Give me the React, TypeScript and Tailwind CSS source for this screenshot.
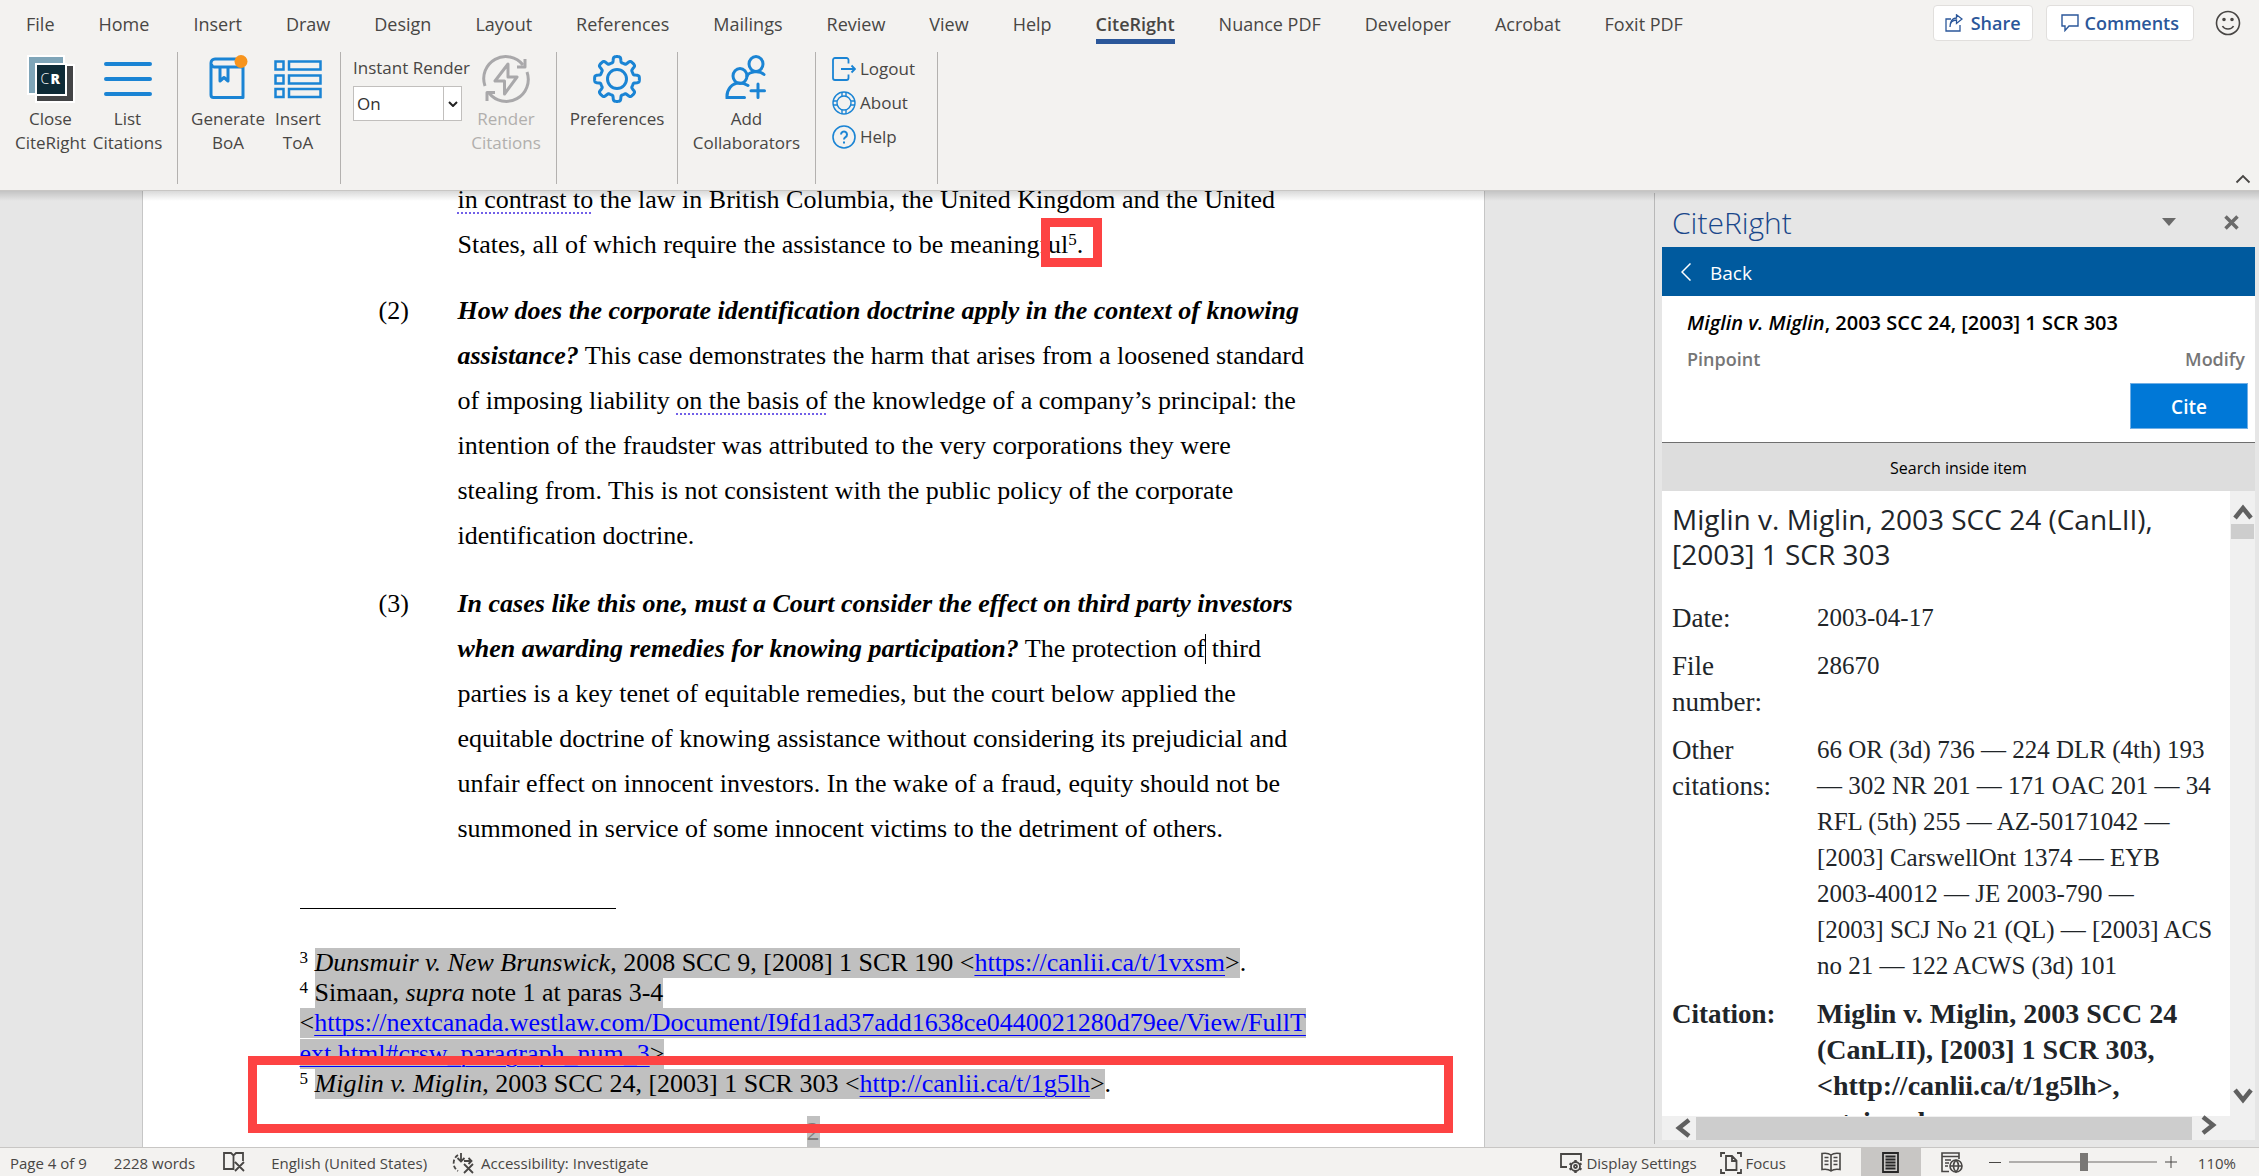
import React from "react";

type Kids = { children: React.ReactNode };

const tabs = [
  "File", "Home", "Insert", "Draw", "Design", "Layout", "References", "Mailings",
  "Review", "View", "Help", "CiteRight", "Nuance PDF", "Developer", "Acrobat", "Foxit PDF",
];

/* ---------- ribbon icons ---------- */

const stroke = { fill: "none", stroke: "#1a84d4", strokeWidth: 3 } as const;

function CloseIcon() {
  return (
    <svg viewBox="0 0 48 48" className="size-12">
      <rect x="1" y="1" width="36" height="38" fill="#7fa5b8" stroke="#fff" strokeWidth="2" />
      <rect x="9" y="10" width="38" height="37" fill="#434446" stroke="#fff" strokeWidth="2" />
      <rect x="9" y="9" width="30" height="31" fill="#0e2a36" stroke="#fff" strokeWidth="2" />
      <text x="13.500" y="29" fill="#fff" fontFamily="Open Sans, sans-serif" fontSize="14" fontWeight="300">C</text>
      <text x="23.500" y="29" fill="#fff" fontFamily="Open Sans, sans-serif" fontSize="14" fontWeight="800">R</text>
    </svg>
  );
}

function ListIcon() {
  return (
    <svg viewBox="0 0 48 48" className="size-12">
      <g stroke="#1a84d4" strokeWidth="4" strokeLinecap="round">
        <path d="M2 9H46M2 24H46M2 39H46" />
      </g>
    </svg>
  );
}

function BookIcon() {
  return (
    <svg viewBox="0 0 48 48" className="size-12">
      <g {...stroke} strokeLinejoin="round">
        <path d="M39 12V42.500H9.500a2.500 2.500 0 0 1-2.500-2.500V8a4 4 0 0 1 4-4H32" />
        <path d="M7.500 9a3 3 0 0 0 3 3H39" />
        <path d="M16 12V26L20 22.500L24 26V12" />
      </g>
      <circle cx="37" cy="6.500" r="6.500" fill="#f7941d" />
    </svg>
  );
}

function TableIcon() {
  return (
    <svg viewBox="0 0 48 48" className="size-12">
      <g {...stroke} strokeWidth="2.500">
        <path d="M1.500 6.500h8v8h-8zM15 6.500h31.500v8H15zM1.500 20.500h8v8h-8zM15 20.500h31.500v8H15zM1.500 34h8v8h-8zM15 34h31.500v8H15z" />
      </g>
    </svg>
  );
}

function RenderIcon() {
  return (
    <svg viewBox="0 0 48 48" className="size-12" fill="none" stroke="#a9a8aa" strokeWidth="3" strokeLinejoin="round">
      <path d="M3 31A22 22 0 0 1 41 10M45 17A22 22 0 0 1 7 38" />
      <path d="M43 4V12H35M5 46V37.500H13" />
      <path d="M26 9L13 26H22.500V39L35 22H26Z" />
    </svg>
  );
}

function gearPath() {
  const points: string[] = [];
  const steps = 240;
  for (let i = 0; i <= steps; i++) {
    const a = (i / steps) * Math.PI * 2;
    const wave = Math.tanh(3 * Math.cos(8 * a));
    const r = 19.6 + 2.8 * wave;
    points.push(`${(24 + r * Math.sin(a)).toFixed(2)} ${(24 - r * Math.cos(a)).toFixed(2)}`);
  }
  return `M${points.join("L")}Z`;
}

function GearIcon() {
  return (
    <svg viewBox="0 0 48 48" className="size-12" {...stroke} strokeLinejoin="round">
      <path d={gearPath()} />
      <circle cx="24" cy="24" r="9.500" />
    </svg>
  );
}

function CollabIcon() {
  return (
    <svg viewBox="0 0 48 48" className="size-12" {...stroke} strokeLinecap="round">
      <ellipse cx="33" cy="9" rx="7" ry="7.500" />
      <ellipse cx="17" cy="21" rx="7" ry="7.500" />
      <path d="M24 21c2.500-4.500 12-6 17-1.500" />
      <path d="M21.500 42.500H4c-.500-8 5-14.500 12-14.500c4 0 6 .500 9 2.500M35 29V42.500M28 35.800H41.500" />
    </svg>
  );
}

function LogoutIcon() {
  return (
    <svg viewBox="0 0 24 24" className="size-6" fill="none" stroke="#1a84d4" strokeWidth="1.800">
      <path d="M16.500 6.500V3a2 2 0 0 0-2-2H3A2 2 0 0 0 1 3V21a2 2 0 0 0 2 2H14.500a2 2 0 0 0 2-2V17.500M9 12H23M19.500 8.500L23 12L19.500 15.500" />
    </svg>
  );
}

function AboutIcon() {
  return (
    <svg viewBox="0 0 24 24" className="size-6" fill="none" stroke="#1a84d4" strokeWidth="1.400">
      <circle cx="12" cy="12" r="11" />
      <circle cx="12" cy="12" r="7" />
      <path d="M10 1V5M14 1V5M10 19V23M14 19V23M1 10H5M1 14H5M19 10H23M19 14H23" />
    </svg>
  );
}

function HelpIcon() {
  return (
    <svg viewBox="0 0 24 24" className="size-6" fill="none" stroke="#1a84d4" strokeWidth="1.600">
      <circle cx="12" cy="12" r="11" />
      <path d="M9 9.500a3 3 0 1 1 4.500 2.600c-1 .600-1.500 1.200-1.500 2.400M12 16.500V18.500" strokeWidth="2" />
    </svg>
  );
}

/* ---------- ribbon pieces ---------- */

function Group({ children, className = "" }: Kids & { className?: string }) {
  return <div className={`flex items-start border-r border-[#b3b1af] pt-[3px] ${className}`}>{children}</div>;
}

function BigButton({ icon, lines, className, disabled }: { icon: React.ReactNode; lines: string[]; className: string; disabled?: boolean }) {
  return (
    <button disabled={disabled} className={`flex flex-col items-center text-[17px] leading-6 whitespace-nowrap disabled:text-[#b1afad] ${className}`}>
      {icon}
      <span className="mt-1">
        {lines.map((l) => <span key={l} className="block">{l}</span>)}
      </span>
    </button>
  );
}

function SmallButton({ icon, label }: { icon: React.ReactNode; label: string }) {
  return (
    <button className="flex h-[34px] items-center gap-1 text-[17px]">
      {icon}
      {label}
    </button>
  );
}

function Header() {
  return (
    <header className="flex h-[191px] shrink-0 flex-col border-b border-[#c8c6c4] bg-[#f3f2f0] text-[#484644]">
      <div className="flex h-[52px] items-start">
        <nav className="flex pl-1">
          {tabs.map((t) =>
            t === "CiteRight" ? (
              <button key={t} className="relative mx-[22px] h-12 text-lg font-semibold whitespace-nowrap">
                {t}
                <span className="absolute inset-x-0 bottom-1 h-[5px] bg-[#2b579a]" />
              </button>
            ) : (
              <button key={t} className="h-12 px-[22px] text-lg whitespace-nowrap">{t}</button>
            )
          )}
        </nav>
        <div className="ml-auto flex items-center gap-[13px] pt-[5px] pr-[18px] text-lg font-semibold text-[#2b579a]">
          <button className="flex h-9 items-center gap-2 rounded-sm border border-[#e1dfdd] bg-white px-[11px]">
            <svg viewBox="0 0 18 18" className="size-[18px]" fill="none" stroke="#2b579a" strokeWidth="1.300">
              <path d="M6 5H1V17H15V11M5 13C5 8 8 6 11.500 6V9.500L17 5L11.500 .8V4C7 4 5 8 5 13Z" />
            </svg>
            Share
          </button>
          <button className="flex h-9 items-center gap-1.5 rounded-sm border border-[#e1dfdd] bg-white px-3.5">
            <svg viewBox="0 0 18 18" className="size-[18px]" fill="none" stroke="#2b579a" strokeWidth="1.400">
              <path d="M1 1H17V12H8L4 16.500V12H1Z" />
            </svg>
            Comments
          </button>
          <button aria-label="Feedback" className="ml-2">
            <svg viewBox="0 0 26 26" className="size-[26px]" fill="none" stroke="#484644" strokeWidth="1.600">
              <circle cx="13" cy="13" r="11.500" />
              <path d="M7.500 16c2 4 9 4 11 0" />
              <circle cx="9" cy="9.500" r="1" fill="#484644" />
              <circle cx="17" cy="9.500" r="1" fill="#484644" />
            </svg>
          </button>
        </div>
      </div>
      <div className="flex h-[132px]">
        <Group className="pr-[11px] pl-3">
          <BigButton className="w-[77px]" icon={<CloseIcon />} lines={["Close", "CiteRight"]} />
          <BigButton className="w-[77px]" icon={<ListIcon />} lines={["List", "Citations"]} />
        </Group>
        <Group className="pr-3 pl-2.5">
          <BigButton className="w-20" icon={<BookIcon />} lines={["Generate", "BoA"]} />
          <BigButton className="w-[60px]" icon={<TableIcon />} lines={["Insert", "ToA"]} />
        </Group>
        <Group className="pr-2.5 pl-3">
          <div className="flex w-[113px] flex-col pt-px text-[17px] leading-6 whitespace-nowrap">
            <label htmlFor="instant">Instant Render</label>
            <span className="relative mt-1.5 block w-[109px]">
              <select id="instant" className="block h-[35px] w-full appearance-none border border-[#c1bfbd] bg-white pl-[3px] text-[#323130]">
                <option>On</option>
                <option>Off</option>
              </select>
              <span className="pointer-events-none absolute inset-y-0 right-0 flex w-[19px] items-center justify-center border-l border-[#c1bfbd]">
                <svg viewBox="0 0 10 6" className="w-2.5" fill="none" stroke="#222" strokeWidth="2">
                  <path d="M1 1L5 5L9 1" />
                </svg>
              </span>
            </span>
          </div>
          <BigButton disabled className="w-20" icon={<RenderIcon />} lines={["Render", "Citations"]} />
        </Group>
        <Group className="px-4">
          <BigButton className="w-[88px]" icon={<GearIcon />} lines={["Preferences"]} />
        </Group>
        <Group className="px-3.5">
          <BigButton className="w-[109px]" icon={<CollabIcon />} lines={["Add", "Collaborators"]} />
        </Group>
        <div className="flex w-[122px] flex-col border-r border-[#b3b1af] pl-4">
          <SmallButton icon={<LogoutIcon />} label="Logout" />
          <SmallButton icon={<AboutIcon />} label="About" />
          <SmallButton icon={<HelpIcon />} label="Help" />
        </div>
        <button aria-label="Collapse the ribbon" className="mr-2 ml-auto self-end">
          <svg viewBox="0 0 16 10" className="w-4" fill="none" stroke="#484644" strokeWidth="1.800">
            <path d="M1.500 8.500L8 2L14.500 8.500" />
          </svg>
        </button>
      </div>
    </header>
  );
}

/* ---------- document ---------- */

function Lines({ rows }: { rows: React.ReactNode[] }) {
  return (
    <p className="leading-[45px] whitespace-nowrap">
      {rows.map((r, i) => <span key={i} className="block">{r}</span>)}
    </p>
  );
}

function Flag({ children }: Kids) {
  return (
    <span className="underline decoration-[#7160e8] decoration-dotted decoration-2 underline-offset-4 [text-decoration-skip-ink:none]">
      {children}
    </span>
  );
}

function Sup({ children }: Kids) {
  return <sup className="top-[-8px] align-baseline text-[17px] leading-none">{children}</sup>;
}

function Mark({ children }: Kids) {
  return <span className="inline-block bg-[#c0c0c0] align-top leading-[30px]">{children}</span>;
}

function Url({ href, children }: Kids & { href: string }) {
  return <a href={href} className="text-[#0000ff] underline decoration-1 underline-offset-4">{children}</a>;
}

const westlaw = "https://nextcanada.westlaw.com/Document/I9fd1ad37add1638ce0440021280d79ee/View/FullText.html#crsw_paragraph_num_3";

function Document() {
  return (
    <main className="relative flex min-w-0 flex-1 justify-center overflow-hidden pr-7">
      <article className="w-full max-w-[1343px] border-x border-[#c6c6c6] bg-white px-[157px] font-['Liberation_Serif',serif] text-[26px] text-black">
        <div className="-mt-3.5 grid grid-cols-[79px_1fr] gap-y-[21px] pl-[79px]">
          <div />
          <Lines
            rows={[
              <><Flag>in contrast to</Flag> the law in British Columbia, the United Kingdom and the United</>,
              <>
                States, all of which require the assistance to be meaning
                <span className="relative inline-block leading-[45px]">
                  ful<Sup>5</Sup>.
                  <span className="absolute -top-1 -right-[19px] bottom-0 left-0.5 border-[9px] border-[#fd4343]" />
                </span>
              </>,
            ]}
          />
          <span className="leading-[45px]">(2)</span>
          <Lines
            rows={[
              <b><i>How does the corporate identification doctrine apply in the context of knowing</i></b>,
              <><b><i>assistance?</i></b> This case demonstrates the harm that arises from a loosened standard</>,
              <>of imposing liability <Flag>on the basis of</Flag> the knowledge of a company’s principal: the</>,
              "intention of the fraudster was attributed to the very corporations they were",
              "stealing from. This is not consistent with the public policy of the corporate",
              "identification doctrine.",
            ]}
          />
          <span className="mt-0.5 leading-[45px]">(3)</span>
          <div className="mt-0.5">
            <Lines
              rows={[
                <b><i>In cases like this one, must a Court consider the effect on third party investors</i></b>,
                <>
                  <b><i>when awarding remedies for knowing participation?</i></b> The protection of
                  <span className="relative"><span className="absolute top-0 left-0 h-[30px] w-px bg-black" /></span> third
                </>,
                "parties is a key tenet of equitable remedies, but the court below applied the",
                "equitable doctrine of knowing assistance without considering its prejudicial and",
                "unfair effect on innocent investors. In the wake of a fraud, equity should not be",
                "summoned in service of some innocent victims to the detriment of others.",
              ]}
            />
          </div>
        </div>
        <hr className="mt-[57px] w-[316px] border-black" />
        <section className="mt-[39px] leading-[30px] whitespace-nowrap">
          <div className="h-[30px]">
            <Sup>3</Sup> <Mark><i>Dunsmuir v. New Brunswick</i>, 2008 SCC 9, [2008] 1 SCR 190 &lt;<Url href="https://canlii.ca/t/1vxsm">https://canlii.ca/t/1vxsm</Url>&gt;</Mark>.
          </div>
          <div className="h-[30px]">
            <Sup>4</Sup> <Mark>Simaan, <i>supra</i> note 1 at paras 3-4</Mark>
          </div>
          <div className="h-[31px]">
            <Mark>&lt;<Url href={westlaw}>https://nextcanada.westlaw.com/Document/I9fd1ad37add1638ce0440021280d79ee/View/FullT</Url></Mark>
          </div>
          <div className="h-[30px]">
            <Mark><Url href={westlaw}>ext.html#crsw_paragraph_num_3</Url>&gt;</Mark>
          </div>
          <div className="relative h-[30px]">
            <Sup>5</Sup> <Mark><i>Miglin v. Miglin</i>, 2003 SCC 24, [2003] 1 SCR 303 &lt;<Url href="http://canlii.ca/t/1g5lh">http://canlii.ca/t/1g5lh</Url>&gt;</Mark>.
            <span className="absolute -top-[13px] -right-[126px] -left-[52px] z-10 h-[77px] border-[9px] border-[#fd4343]" />
          </div>
        </section>
        <footer className="mt-[17px] text-center leading-8 text-[#7f7f7f]">
          <span className="inline-block bg-[#c0c0c0]">2</span>
        </footer>
      </article>
    </main>
  );
}

/* ---------- task pane ---------- */

const facts: { label: string; lines: string[]; strong?: boolean }[] = [
  { label: "Date:", lines: ["2003-04-17"] },
  { label: "File number:", lines: ["28670"] },
  {
    label: "Other citations:",
    lines: [
      "66 OR (3d) 736 — 224 DLR (4th) 193",
      "— 302 NR 201 — 171 OAC 201 — 34",
      "RFL (5th) 255 — AZ-50171042 —",
      "[2003] CarswellOnt 1374 — EYB",
      "2003-40012 — JE 2003-790 —",
      "[2003] SCJ No 21 (QL) — [2003] ACS",
      "no 21 — 122 ACWS (3d) 101",
    ],
  },
  {
    label: "Citation:",
    lines: ["Miglin v. Miglin, 2003 SCC 24", "(CanLII), [2003] 1 SCR 303,", "<http://canlii.ca/t/1g5lh>,", "retrieved on"],
    strong: true,
  },
];

function Arrow({ d, label }: { d: string; label: string }) {
  return (
    <button aria-label={label}>
      <svg viewBox="0 0 20 20" className="size-5" fill="none" stroke="#606060" strokeWidth="4.500">
        <path d={d} />
      </svg>
    </button>
  );
}

function Pane() {
  return (
    <aside className="mt-0.5 mb-[3px] flex w-[605px] shrink-0 flex-col border-l border-[#b8b8b8] pr-1 pb-1 pl-[7px] text-black">
      <div className="flex h-[54px] shrink-0 items-center pr-4 pl-2.5">
        <h2 className="pt-1 text-[30px] font-light text-[#19478a]">CiteRight</h2>
        <button aria-label="Task pane options" className="mr-12 ml-auto pt-1">
          <svg viewBox="0 0 14 8" className="w-3.5"><path d="M0 0H14L7 8Z" fill="#6a6a6a" /></svg>
        </button>
        <button aria-label="Close pane" className="pt-1">
          <svg viewBox="0 0 15 15" className="w-[15px]" stroke="#6a6a6a" strokeWidth="3.500"><path d="M1.500 1.500L13.500 13.500M13.500 1.500L1.500 13.500" /></svg>
        </button>
      </div>
      <button className="flex h-[49px] shrink-0 items-center gap-[19px] bg-[#005a9e] pl-[19px] text-[19px] text-white">
        <svg viewBox="0 0 10 18" className="h-[18px] w-2.5" fill="none" stroke="#fff" strokeWidth="1.500"><path d="M9.500 .5L1 9L9.500 17.500" /></svg>
        <span className="pt-1">Back</span>
      </button>
      <section className="flex h-[147px] shrink-0 flex-col border-b border-[#6e6e6e] bg-white pt-3 pl-[25px]">
        <h3 className="text-[20px] leading-[30px] font-semibold whitespace-nowrap"><i>Miglin v. Miglin</i>, 2003 SCC 24, [2003] 1 SCR 303</h3>
        <div className="mt-[7px] flex justify-between pr-2.5 text-lg font-semibold text-[#767676]">
          <button>Pinpoint</button>
          <button>Modify</button>
        </div>
        <button className="mt-2.5 mr-[7px] h-[46px] w-[118px] self-end border border-[#71afe5] bg-[#0078d7] pt-0.5 text-[19px] font-semibold text-white">Cite</button>
      </section>
      <button className="h-12 shrink-0 bg-[#dddddd] pt-0.5 text-base">Search inside item</button>
      <div className="flex min-h-0 flex-1 bg-white text-[#212529]">
        <div className="min-w-0 flex-1 overflow-hidden pt-[11px] pl-2.5">
          <h1 className="text-[28px] leading-[35px] whitespace-nowrap">Miglin v. Miglin, 2003 SCC 24 (CanLII),<br />[2003] 1 SCR 303</h1>
          <table className="mt-7 font-['Liberation_Serif',serif] text-[25px] leading-9">
            <tbody>
              {facts.map((f) => (
                <tr key={f.label}>
                  <th scope="row" className={`w-[145px] pr-8 pb-3 text-left align-top text-[27px] ${f.strong ? "font-bold" : "font-normal"}`}>{f.label}</th>
                  <td className={`pb-3 align-top whitespace-nowrap ${f.strong ? "text-[28px] font-bold" : ""}`}>
                    {f.lines.map((l) => <div key={l}>{l}</div>)}
                  </td>
                </tr>
              ))}
            </tbody>
          </table>
        </div>
        <div className="flex w-[25px] shrink-0 flex-col items-center justify-between bg-[#f0f0f0] pt-[11px] pb-2.5">
          <div className="flex flex-col items-center gap-0.5">
            <Arrow label="Scroll up" d="M2 16L10 6L18 16" />
            <div className="h-[15px] w-[23px] bg-[#cdcdcd]" />
          </div>
          <Arrow label="Scroll down" d="M2 4L10 14L18 4" />
        </div>
      </div>
      <div className="flex h-6 shrink-0 items-center gap-[3px] bg-[#f0f0f0] pr-9 pl-[11px]">
        <Arrow label="Scroll left" d="M16 2L6 10L16 18" />
        <div className="mt-px h-[23px] flex-1 bg-[#cdcdcd]" />
        <span className="pl-1"><Arrow label="Scroll right" d="M4 2L14 10L4 18" /></span>
      </div>
    </aside>
  );
}

/* ---------- status bar ---------- */

function StatusBar() {
  const icon = { fill: "none", stroke: "#484644", strokeWidth: 1.8 } as const;
  return (
    <footer className="flex h-[29px] shrink-0 items-center border-t border-[#c8c6c4] bg-[#f3f2f0] pr-[23px] pl-2.5 text-[15px] whitespace-nowrap text-[#484644]">
      <button className="mr-[27px] pt-0.5">Page 4 of 9</button>
      <button className="mr-7 pt-0.5">2228 words</button>
      <button aria-label="Proofing" className="mr-[26px]">
        <svg viewBox="0 0 22 20" className="w-[22px]" {...icon}>
          <path d="M10 17H1V1H8L10.500 3.500L13 1H20V9M10.500 3.500V18M12 10L21 19M21 10L12 19" />
        </svg>
      </button>
      <button className="mr-6 pt-0.5">English (United States)</button>
      <button className="flex items-center gap-1.5 pt-0.5">
        <svg viewBox="0 0 24 22" className="w-6" {...icon}>
          <path d="M7 3A9.500 9.500 0 0 0 7 19" strokeDasharray="4 2" />
          <path d="M10 1V9M6.500 6L10 9.500L13.500 6M13 9H20M17.500 6L20.500 9L17.500 12M13 12L22 21M22 12L13 21" />
        </svg>
        Accessibility: Investigate
      </button>
      <div className="ml-auto flex h-full items-center">
        <button className="mr-[23px] flex items-center gap-1 pt-0.5">
          <svg viewBox="0 0 22 20" className="w-[22px]" {...icon}>
            <path d="M7 14H1V1H21V8M2 14L6 14" />
            <circle cx="15.500" cy="13.500" r="4.500" />
            <circle cx="15.500" cy="13.500" r="1.500" />
            <path d="M15.500 7V9M15.500 18V20M9.500 10.500L11.500 11.500M21.500 10.500L19.500 11.500M9.500 16.500L11.500 15.500M21.500 16.500L19.500 15.500" strokeWidth="2.400" />
          </svg>
          Display Settings
        </button>
        <button className="mr-[35px] flex items-center gap-1 pt-0.5">
          <svg viewBox="0 0 22 22" className="w-[22px]" {...icon}>
            <path d="M1 5V1H5M17 1H21V5M21 17V21H17M5 21H1V17M6 4H12L16.500 8.500V18H6ZM12 4V9H16.500" />
          </svg>
          Focus
        </button>
        <button aria-label="Read mode" className="mr-5">
          <svg viewBox="0 0 20 20" className="w-5" {...icon} strokeWidth="1.600">
            <path d="M10 3C7.500 1 4 1 1 1.500V17.500C4 17 7.500 17 10 19C12.500 17 16 17 19 17.500V1.500C16 1 12.500 1 10 3V19M3.500 5.500H7.500M3.500 9H7.500M3.500 12.500H7.500M12.500 5.500H16.500M12.500 9H16.500M12.500 12.500H16.500" />
          </svg>
        </button>
        <button aria-label="Print layout" aria-pressed="true" className="flex h-full w-[60px] items-center justify-center bg-[#c8c6c4]">
          <svg viewBox="0 0 17 21" className="w-[17px]" fill="none" stroke="#262626" strokeWidth="1.800">
            <path d="M1 1H16V20H1ZM3.500 4.500H13.500M3.500 7.500H13.500M3.500 10.500H13.500M3.500 13.500H13.500M3.500 16.500H13.500" />
          </svg>
        </button>
        <button aria-label="Web layout" className="mr-[26px] ml-5">
          <svg viewBox="0 0 22 21" className="w-[22px]" {...icon} strokeWidth="1.600">
            <path d="M8 19.500H1V1H18V7M1 4.500H18M4 8H10M4 11H8M4 14H7" />
            <circle cx="15" cy="14" r="6" />
            <path d="M9 14H21M15 8C11.500 12 11.500 16 15 20C18.500 16 18.500 12 15 8" />
          </svg>
        </button>
        <button aria-label="Zoom out" className="mr-2 h-px w-3 bg-[#484644]" />
        <input
          type="range"
          aria-label="Zoom"
          defaultValue={51}
          className="h-5 w-[148px] appearance-none bg-[linear-gradient(#b0aeac,#b0aeac)] bg-[length:100%_2px] bg-center bg-no-repeat [&::-webkit-slider-thumb]:h-[18px] [&::-webkit-slider-thumb]:w-2 [&::-webkit-slider-thumb]:appearance-none [&::-webkit-slider-thumb]:bg-[#797775]"
        />
        <button aria-label="Zoom in" className="ml-2">
          <svg viewBox="0 0 12 12" className="w-3" stroke="#484644"><path d="M6 0V12M0 6H12" /></svg>
        </button>
        <button className="ml-[21px] pt-0.5">110%</button>
      </div>
    </footer>
  );
}

export default function App() {
  return (
    <div className="flex h-screen flex-col overflow-hidden bg-[#e6e6e6] font-['Open_Sans',sans-serif]">
      <Header />
      <div className="relative flex min-h-0 flex-1">
        <Document />
        <Pane />
        <div className="pointer-events-none absolute inset-x-0 top-0 h-2.5 bg-linear-to-b from-black/15 to-transparent" />
      </div>
      <StatusBar />
    </div>
  );
}
